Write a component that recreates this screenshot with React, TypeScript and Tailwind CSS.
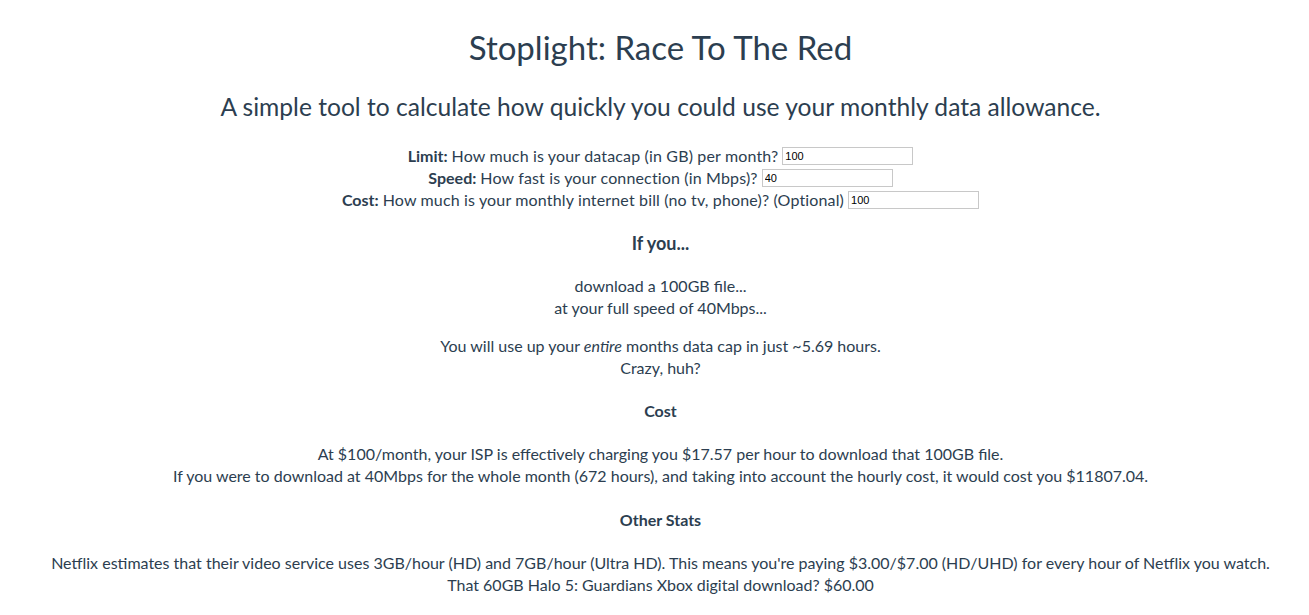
import React, { useState } from "react";

const font = { fontFamily: "Lato, 'Open Sans', sans-serif" };

type FieldProps = {
    label: string
    question: string
    value: string
    onChange: (v: string) => void
}

function Field({ label, question, value, onChange }: FieldProps) {
    return (
        <div className="flex items-center justify-center h-[22px]">
            <span className="font-bold mr-1">{label}</span>
            <span className="tracking-[0.15px]">{question}</span>
            <input
                className="ml-1 w-[131px] h-[18px] border border-[#c8c8c8] px-[2px] text-[11px] text-black outline-none"
                style={{ fontFamily: "'Liberation Sans', Arial, sans-serif" }}
                value={value}
                onChange={(e) => onChange(e.target.value)}
            />
        </div>
    )
}

export default function App() {
    const [limit, setLimit] = useState('100')
    const [speed, setSpeed] = useState('40')
    const [cost, setCost] = useState('100')

    return (
        <div className="w-full min-h-[615px] bg-white pl-[12px] text-[#2c3e50] text-center text-[16px]" style={font}>
            <h1 className="pt-[27px] text-[33px] leading-[40px]">Stoplight: Race To The Red</h1>
            <h2 className="mt-[25px] text-[24.6px] leading-[30px]">A simple tool to calculate how quickly you could use your monthly data allowance.</h2>
            <div className="mt-[23px] leading-[22px]">
                <Field label="Limit:" question="How much is your datacap (in GB) per month?" value={limit} onChange={setLimit} />
                <Field label="Speed:" question="How fast is your connection (in Mbps)?" value={speed} onChange={setSpeed} />
                <Field label="Cost:" question="How much is your monthly internet bill (no tv, phone)? (Optional)" value={cost} onChange={setCost} />
            </div>
            <h3 className="mt-[20px] text-[18px] leading-[24px] font-bold">If you...</h3>
            <div className="mt-[20px] leading-[22px]">
                <p>download a 100GB file...</p>
                <p>at your full speed of 40Mbps...</p>
            </div>
            <div className="mt-[16px] leading-[22px]">
                <p>You will use up your <em>entire</em> months data cap in just ~5.69 hours.</p>
                <p>Crazy, huh?</p>
            </div>
            <h4 className="mt-[21px] leading-[22px] font-bold">Cost</h4>
            <div className="mt-[21px] leading-[22px]">
                <p>At $100/month, your ISP is effectively charging you $17.57 per hour to download that 100GB file.</p>
                <p>If you were to download at 40Mbps for the whole month (672 hours), and taking into account the hourly cost, it would cost you $11807.04.</p>
            </div>
            <h4 className="mt-[22px] leading-[22px] font-bold">Other Stats</h4>
            <div className="mt-[21px] leading-[22px]">
                <p>Netflix estimates that their video service uses 3GB/hour (HD) and 7GB/hour (Ultra HD). This means you're paying $3.00/$7.00 (HD/UHD) for every hour of Netflix you watch.</p>
                <p>That 60GB Halo 5: Guardians Xbox digital download? $60.00</p>
            </div>
        </div>
    )
}
